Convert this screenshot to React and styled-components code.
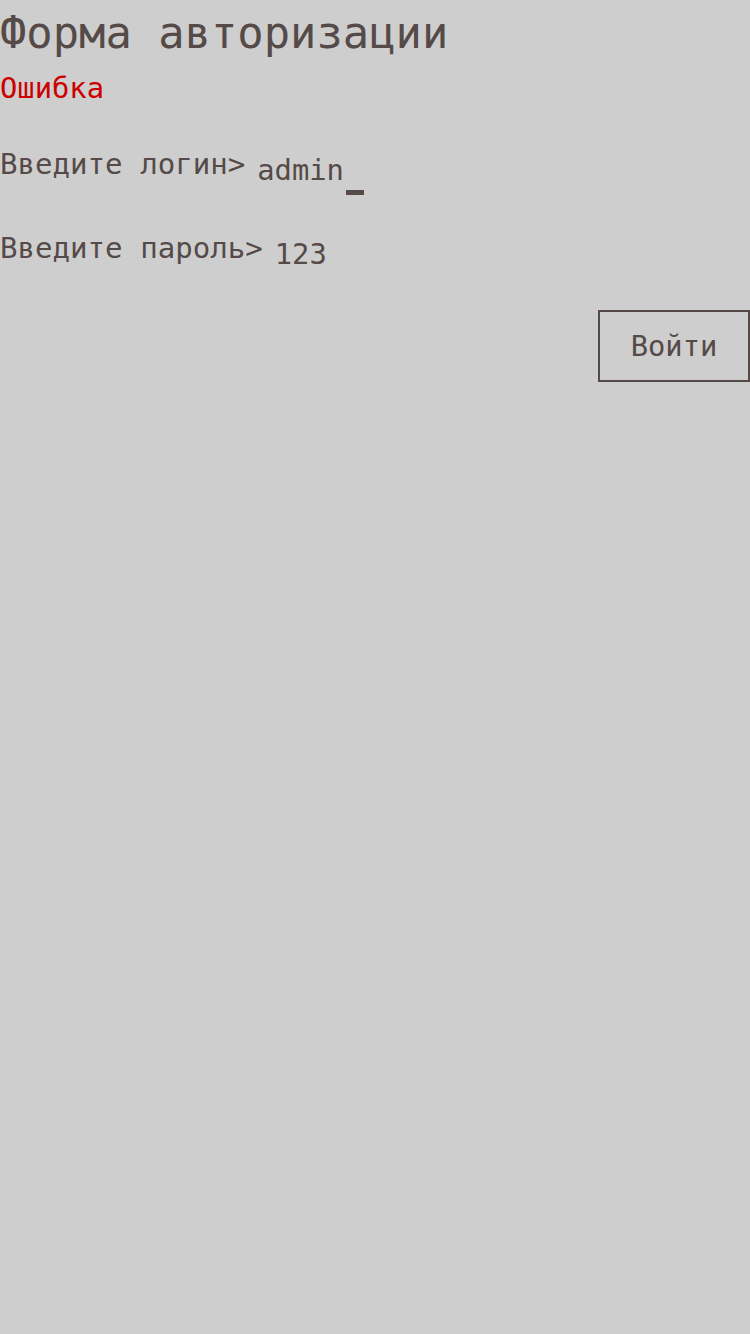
import React from "react";
import styled, { createGlobalStyle } from "styled-components";

const GlobalStyle = createGlobalStyle`
  html, body {
    margin: 0;
    padding: 0;
    background: #cecece;
  }
  body {
    font-family: "DejaVu Sans Mono", "Liberation Mono", monospace;
    color: #554a48;
  }
`;

const Page = styled.div`
  min-height: 1334px;
  width: 750px;
  display: flex;
  flex-direction: column;
`;

const Title = styled.h1`
  margin: 0;
  font-size: 43.8px;
  font-weight: normal;
  line-height: 66px;
`;

const Error = styled.div`
  margin-top: 4px;
  color: #cc0000;
  font-size: 28.8px;
  line-height: 36px;
`;

const Form = styled.form`
  display: flex;
  flex-direction: column;
  gap: 40px;
  margin-top: 39px;
`;

const Row = styled.label`
  display: flex;
  align-items: flex-start;
  font-size: 29.1px;
  line-height: 38px;
`;

const Prompt = styled.span`
  white-space: pre;
`;

const Field = styled.span`
  margin-left: 12px;
  padding-top: 6px;
  display: flex;
  align-items: flex-end;
  font-size: 28.8px;
`;

const Cursor = styled.span`
  display: inline-block;
  width: 18px;
  height: 5px;
  margin-left: 2px;
  margin-bottom: -6px;
  background: #554a48;
`;

const Actions = styled.div`
  display: flex;
  justify-content: flex-end;
  margin-top: 37px;
`;

const Button = styled.button`
  width: 152px;
  height: 72px;
  background: transparent;
  border: 2px solid #554a48;
  font-family: inherit;
  font-size: 28.8px;
  color: #554a48;
  cursor: pointer;
`;

export default function App() {
  return (
    <>
      <GlobalStyle />
      <Page>
        <Title>Форма авторизации</Title>
        <Error>Ошибка</Error>
        <Form onSubmit={(e) => e.preventDefault()}>
          <Row>
            <Prompt>Введите логин&gt;</Prompt>
            <Field>
              admin
              <Cursor />
            </Field>
          </Row>
          <Row>
            <Prompt>Введите пароль&gt;</Prompt>
            <Field>123</Field>
          </Row>
        </Form>
        <Actions>
          <Button type="button">Войти</Button>
        </Actions>
      </Page>
    </>
  );
}
